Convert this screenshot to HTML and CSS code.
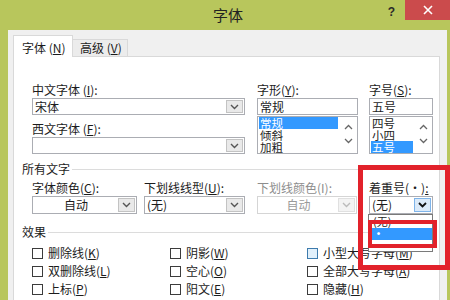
FILE: index.html
```html
<!DOCTYPE html>
<html lang="zh">
<head>
<meta charset="utf-8">
<link rel="stylesheet" href="styles.css">
</head>
<body>
<div class="window">
  <div class="titlebar">
    <div class="title">字体</div>
    <div class="controls">
      <div class="help">?</div>
      <div class="close"><svg width="10" height="10" viewBox="0 0 10 10"><path d="M1 1L9 9M9 1L1 9" stroke="#fff" stroke-width="1.6"/></svg></div>
    </div>
  </div>
  <div class="body">
    <div class="tabs">
      <div class="tab active">字体 (<u>N</u>)</div>
      <div class="tab">高级 (<u>V</u>)</div>
    </div>
    <div class="panel">
      <div class="fields top">
        <div class="col c1">
          <div class="lbl">中文字体 (<u>I</u>):</div>
          <div class="combo"><span class="val">宋体</span><span class="arr"><svg width="9" height="6" viewBox="0 0 9 6"><polyline points="1,1 4.5,4.5 8,1" fill="none" stroke="#555" stroke-width="1.4"/></svg></span></div>
          <div class="lbl mt">西文字体 (<u>F</u>):</div>
          <div class="combo"><span class="val"></span><span class="arr"><svg width="9" height="6" viewBox="0 0 9 6"><polyline points="1,1 4.5,4.5 8,1" fill="none" stroke="#555" stroke-width="1.4"/></svg></span></div>
        </div>
        <div class="col c2">
          <div class="lbl">字形(<u>Y</u>):</div>
          <div class="input">常规</div>
          <div class="listbox">
            <div class="items"><div class="item sel">常规</div><div class="item">倾斜</div><div class="item">加粗</div></div>
            <div class="scroll">
              <svg width="9" height="6" viewBox="0 0 9 6"><polyline points="1,5 4.5,1.5 8,5" fill="none" stroke="#666" stroke-width="1.3"/></svg>
              <svg width="9" height="6" viewBox="0 0 9 6"><polyline points="1,1 4.5,4.5 8,1" fill="none" stroke="#666" stroke-width="1.3"/></svg>
            </div>
          </div>
        </div>
        <div class="col c3">
          <div class="lbl">字号(<u>S</u>):</div>
          <div class="input">五号</div>
          <div class="listbox">
            <div class="items"><div class="item">四号</div><div class="item">小四</div><div class="item sel">五号</div></div>
            <div class="scroll">
              <svg width="9" height="6" viewBox="0 0 9 6"><polyline points="1,5 4.5,1.5 8,5" fill="none" stroke="#666" stroke-width="1.3"/></svg>
              <svg width="9" height="6" viewBox="0 0 9 6"><polyline points="1,1 4.5,4.5 8,1" fill="none" stroke="#666" stroke-width="1.3"/></svg>
            </div>
          </div>
        </div>
      </div>

      <div class="section s1"><span>所有文字</span><i class="rule"></i></div>

      <div class="fields row2">
        <div class="col d1">
          <div class="lbl">字体颜色(<u>C</u>):</div>
          <div class="select"><span class="val center">自动</span><span class="arr"><svg width="9" height="6" viewBox="0 0 9 6"><polyline points="1,1 4.5,4.5 8,1" fill="none" stroke="#555" stroke-width="1.4"/></svg></span></div>
        </div>
        <div class="col d2">
          <div class="lbl">下划线线型(<u>U</u>):</div>
          <div class="select"><span class="val">(无)</span><span class="arr"><svg width="9" height="6" viewBox="0 0 9 6"><polyline points="1,1 4.5,4.5 8,1" fill="none" stroke="#555" stroke-width="1.4"/></svg></span></div>
        </div>
        <div class="col d3">
          <div class="lbl dis">下划线颜色(I):</div>
          <div class="select disabled"><span class="val center">自动</span><span class="arr"><svg width="9" height="6" viewBox="0 0 9 6"><polyline points="1,1 4.5,4.5 8,1" fill="none" stroke="#bbb" stroke-width="1.4"/></svg></span></div>
        </div>
        <div class="col d4">
          <div class="lbl">着重号(·)<u>:</u></div>
          <div class="select active"><span class="val">(无)</span><span class="arr"><svg width="9" height="6" viewBox="0 0 9 6"><polyline points="1,1 4.5,4.5 8,1" fill="none" stroke="#111" stroke-width="1.8"/></svg></span></div>
        </div>
      </div>

      <div class="section s2"><span>效果</span><i class="rule"></i></div>

      <div class="checks">
        <label class="chk"><i class="box"></i>删除线(<u>K</u>)</label>
        <label class="chk"><i class="box"></i>阴影(<u>W</u>)</label>
        <label class="chk"><i class="box hover"></i>小型大写字母(<u>M</u>)</label>
        <label class="chk"><i class="box"></i>双删除线(<u>L</u>)</label>
        <label class="chk"><i class="box"></i>空心(<u>O</u>)</label>
        <label class="chk"><i class="box"></i>全部大写字母(<u>A</u>)</label>
        <label class="chk"><i class="box"></i>上标(<u>P</u>)</label>
        <label class="chk"><i class="box"></i>阳文(<u>E</u>)</label>
        <label class="chk"><i class="box"></i>隐藏(<u>H</u>)</label>
        <label class="chk"><i class="box"></i>下标(<u>B</u>)</label>
        <label class="chk"><i class="box"></i>阴文(<u>G</u>)</label>
        <label class="chk"></label>
      </div>
    </div>
  </div>

  <div class="popup">
    <div class="pitem">(无)</div>
    <div class="pitem psel">·</div>
  </div>
  <div class="mark big"></div>
  <div class="mark small"></div>
</div>
</body>
</html>
```

FILE: styles.css
```css
* { box-sizing: border-box; margin: 0; padding: 0; }
html, body { width: 450px; height: 300px; overflow: hidden; }
body {
  font-family: "Noto Sans CJK SC", "Noto Sans", sans-serif;
  font-size: 12px;
  color: #1c1c1c;
  background: #b8c65c;
}
u { text-decoration: underline; text-underline-offset: 1px; }

.window {
  position: relative;
  width: 450px;
  height: 300px;
  background: #b8c65c;
  display: flex;
  flex-direction: column;
  overflow: hidden;
}

.titlebar {
  height: 30px;
  flex: none;
  display: grid;
  grid-template-columns: 1fr auto 1fr;
}
.title {
  grid-column: 2;
  font-size: 15px;
  line-height: 30px;
  padding-left: 6px;
  color: #222;
}
.controls {
  grid-column: 3;
  justify-self: end;
  display: flex;
  align-items: flex-start;
}
.help {
  font-family: "Liberation Sans", sans-serif;
  font-weight: bold;
  font-size: 12px;
  line-height: 24px;
  color: #2a2a2a;
  margin-right: 10px;
}
.close {
  width: 45px;
  height: 20px;
  background: #cb4b4c;
  display: flex;
  align-items: center;
  justify-content: center;
}

.body {
  flex: 1;
  margin: 0 3px 0 8px;
  background: #f0f0f0;
  padding: 5px 7px 0 5px;
}

.tabs {
  display: flex;
  align-items: flex-end;
  height: 21px;
}
.tab {
  height: 17px;
  padding: 0 6px 0 7px;
  border: 1px solid #d9d9d9;
  border-bottom: none;
  background: #ececec;
  line-height: 16px;
  font-size: 12px;
  white-space: nowrap;
}
.tab.active {
  height: 22px;
  margin-bottom: -1px;
  width: 60px;
  padding: 4px 0 0 8px;
  background: #fff;
  position: relative;
  z-index: 1;
}
.tab + .tab { width: 55px; border-left: none; padding-left: 7px; }

.panel {
  height: 260px;
  background: #fff;
  border: 1px solid #d9d9d9;
  padding: 26px 0 0 8px;
}

.fields { display: flex; margin-left: 10px; }
.lbl { height: 14px; line-height: 14px; white-space: nowrap; }
.lbl.mt { margin-top: 7px; }
.lbl.dis { color: #8d8d8d; }

.c1 { width: 213px; }
.c2 { width: 101px; margin-left: 12px; }
.c3 { width: 64px; margin-left: 11px; }

.combo, .input, .select {
  margin-top: 1px;
  height: 17px;
  border: 1px solid #abadb3;
  background: #fff;
  display: flex;
  align-items: stretch;
}
.input { padding-left: 2px; line-height: 15px; }
.val { flex: 1; padding-left: 2px; line-height: 15px; white-space: nowrap; }
.val.center { text-align: center; }
.arr {
  width: 17px;
  margin: 1px;
  background: #e9e9e9;
  border: 1px solid #c3c3c3;
  display: flex;
  align-items: center;
  justify-content: center;
}

.listbox {
  margin-top: 1px;
  height: 38px;
  border: 1px solid #abadb3;
  background: #fff;
  display: flex;
}
.items { flex: 1; padding: 0 1px; }
.item { height: 12px; line-height: 12px; font-size: 11.5px; padding-left: 1px; white-space: nowrap; overflow: hidden; }
.item.sel { background: #3399ff; color: #fff; margin-right: 1px; }
.scroll {
  width: 17px;
  display: flex;
  flex-direction: column;
  justify-content: space-between;
  align-items: center;
  padding: 7px 0 9px;
}

.section {
  display: flex;
  align-items: center;
  height: 14px;
  line-height: 14px;
  margin-right: 6px;
}
.section .rule { flex: 1; height: 1px; background: #dcdcdc; margin-left: 2px; }
.s1 { margin-top: 8px; }
.s2 { margin-top: 11px; }

.row2 { margin-top: 5px; }
.row2 .select { height: 18px; }
.row2 .val { line-height: 16px; }
.d1 { width: 105px; }
.d2 { width: 101px; margin-left: 7px; }
.d3 { width: 100px; margin-left: 12px; }
.d4 { width: 64px; margin-left: 12px; }
.select.disabled { border-color: #d5d5d5; color: #9a9a9a; }
.select.disabled .arr { background: #f3f3f3; border-color: #e0e0e0; }
.select.active .arr { background: #dbeaf9; border-color: #7eb4ea; }

.checks {
  margin: 5px 0 0 10px;
  display: grid;
  grid-template-columns: 138px 137px 1fr;
  grid-auto-rows: 18px;
}
.chk { display: flex; align-items: center; white-space: nowrap; line-height: 14px; }
.box {
  width: 11px;
  height: 11px;
  border: 1px solid #3c3c3c;
  background: #fff;
  margin-right: 5px;
  flex: none;
}
.box.hover { background: #e1f0fb; border-color: #3d7bad; }

.popup {
  position: absolute;
  left: 368px;
  top: 214px;
  width: 65px;
  height: 38px;
  background: #fff;
  border: 1px solid #7a7a7a;
  padding: 0 0 0 3px;
  font-size: 11px;
}
.pitem { height: 13px; line-height: 12px; padding-left: 1px; overflow: hidden; }
.psel { background: #3399ff; color: #fff; font-weight: bold; line-height: 11px; height: 12px; }

.mark { position: absolute; border-style: solid; border-color: #e2222b; }
.mark.big { left: 358px; top: 165px; width: 92px; height: 105px; border-width: 5px; }
.mark.small { left: 368px; top: 220px; width: 69px; height: 28px; border-width: 4px; }
```
